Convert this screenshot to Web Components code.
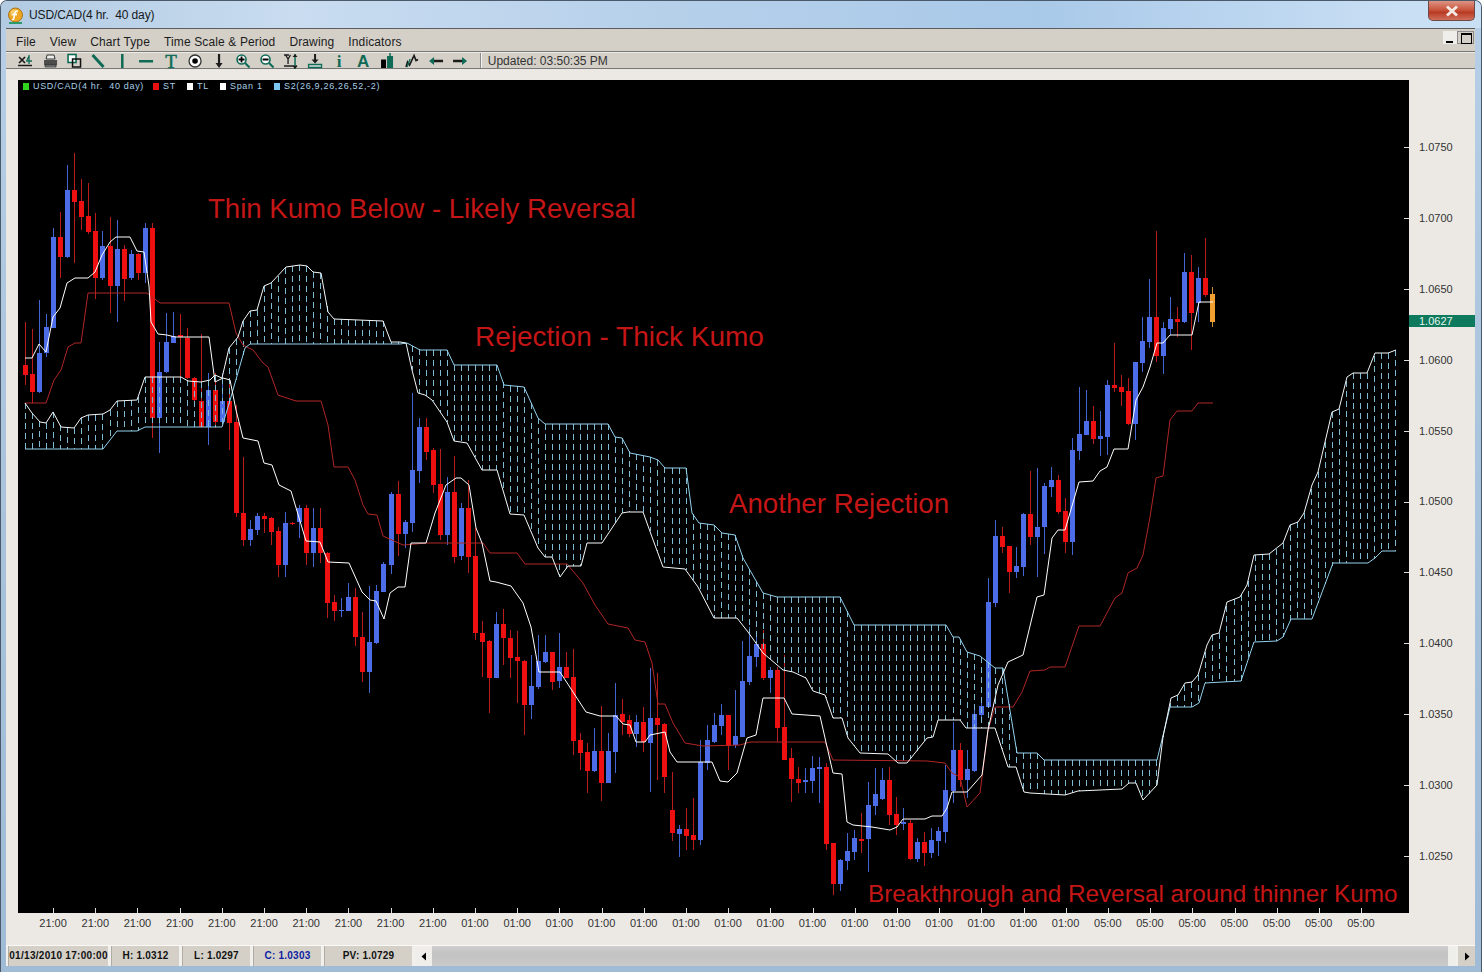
<!DOCTYPE html>
<html>
<head>
<meta charset="utf-8">
<title>USD/CAD</title>
<style>
html, body { margin: 0; padding: 0; background: #fff; }
body { font-family: "Liberation Sans", Arial, sans-serif; }
</style>
</head>
<body>
<app-window>
    <span slot="title">USD/CAD(4 hr.  40 day)</span>
    <app-menubar>
        <span>File</span><span>View</span><span>Chart Type</span><span>Time Scale &amp; Period</span><span>Drawing</span><span>Indicators</span>
    </app-menubar>
    <app-toolbar updated="Updated: 03:50:35 PM"></app-toolbar>
    <app-chart>
        <chart-note x="190" y="114" size="27.6">Thin Kumo Below - Likely Reversal</chart-note>
        <chart-note x="457" y="242" size="28">Rejection - Thick Kumo</chart-note>
        <chart-note x="711" y="409" size="27.7">Another Rejection</chart-note>
        <chart-note x="850" y="799" size="24.3">Breakthrough and Reversal around thinner Kumo</chart-note>
    </app-chart>
    <app-statusbar></app-statusbar>
</app-window>

<script>
// color, wick top, wick bottom, body top, body bottom. x comes from the index.
const CANDLES = `r 322 385 365 375,r 329 403 374 392,b 300 393 353 392,b 314 357 327 353,b 228 328 237 328,r 212 278 237 257,b 165 258 190 257,r 153 263 190 202,r 179 230 201 217,r 183 234 216 232,
r 213 299 231 278,b 231 280 246 278,r 217 313 246 286,b 220 322 249 286,r 245 301 249 279,b 250 280 254 278,r 253 280 254 273,b 223 283 228 273,r 223 438 228 418,b 342 453 372 418,
b 313 373 342 372,b 312 343 336 343,r 314 377 335 337,r 328 379 338 378,r 377 401 378 400,r 334 427 401 427,b 373 445 390 427,r 373 428 390 422,b 373 425 401 422,r 380 450 401 423,
r 405 517 422 513,r 457 546 513 540,b 520 546 529 540,b 513 535 516 530,r 513 533 516 519,r 517 545 518 532,r 527 577 531 565,b 512 577 523 565,r 522 525 523 524,b 505 538 508 522,
r 505 565 508 553,b 508 567 528 553,r 508 563 528 553,r 552 618 553 603,r 595 621 602 611,b 598 617 610 611,b 583 611 597 611,r 588 646 597 637,r 612 682 637 672,b 586 693 642 672,
b 585 644 591 643,b 562 592 564 592,b 492 574 494 565,r 481 556 494 534,b 520 548 522 534,b 393 532 470 523,b 418 483 427 471,r 418 460 427 452,r 448 493 450 485,r 449 540 484 535,
b 477 545 492 535,r 456 563 492 557,b 503 560 508 556,r 480 573 508 557,r 528 640 556 633,r 621 677 633 642,r 640 713 641 678,b 612 678 624 678,r 609 665 624 638,r 630 678 638 658,
r 631 703 657 661,r 660 735 661 705,b 655 719 686 705,b 635 689 661 687,b 635 663 652 662,r 652 690 652 682,b 633 688 667 681,r 652 678 667 678,r 649 755 677 741,r 733 770 740 753,
r 743 793 752 771,b 728 772 751 771,r 706 801 751 783,b 733 783 751 783,b 683 773 715 752,r 699 735 714 722,r 715 737 720 734,b 715 747 722 734,r 707 752 722 742,b 668 792 718 743,
r 673 780 718 725,r 723 793 724 777,r 772 841 810 833,b 825 857 829 834,r 808 850 829 836,r 798 850 835 840,b 740 845 762 840,b 725 770 740 763,b 713 743 725 742,b 704 735 715 726,
r 715 770 715 746,b 690 748 736 745,b 641 737 681 737,b 627 685 656 682,b 632 667 644 657,r 630 680 644 678,b 667 693 670 678,r 667 742 670 728,r 655 760 727 760,r 748 802 758 779,
r 767 793 779 783,b 768 793 780 782,b 756 793 768 781,b 757 803 767 769,r 763 850 767 844,r 843 895 843 884,b 859 891 860 884,b 833 870 851 861,b 830 860 838 852,r 813 853 839 841,
b 782 872 805 839,b 768 815 794 806,b 768 800 780 799,r 767 825 780 815,r 797 835 814 825,b 808 830 822 824,r 820 860 823 859,b 838 862 842 859,r 832 866 842 853,b 828 858 840 853,
b 827 856 831 841,b 765 843 790 832,b 722 803 750 791,r 743 787 750 780,b 750 798 769 780,b 707 772 714 771,b 700 720 706 715,b 578 707 602 707,b 520 607 536 603,r 527 553 536 547,
r 547 593 546 572,b 547 578 566 572,b 513 576 514 567,r 471 545 514 537,b 468 577 527 537,b 483 554 486 527,b 467 497 480 487,r 475 514 480 512,r 498 553 511 542,b 438 555 450 542,
b 387 460 434 451,b 390 435 421 435,r 406 444 421 439,b 411 456 436 439,b 380 455 385 437,r 343 392 385 388,r 375 406 387 392,r 378 425 391 424,b 362 440 362 424,b 317 372 341 363,
b 279 348 317 342,r 231 362 317 356,b 322 374 328 356,b 297 335 319 329,r 307 337 319 322,b 253 323 272 322,r 255 350 272 313,b 267 322 278 303,r 238 297 278 295,o 287 327 294 322`
    .split(',').map(s => s.trim().split(' '));

const TENKAN = [25,358,32,358,39,344,46,352,53,317,60,308,67,283,75,278,88,278,95,272,102,255,110,242,116,237,130,237,137,251,144,252,149,286,151,322,158,334,167,335,175,337,209,337,215,382,223,378,230,380,236,410,243,438,258,441,264,463,272,465,279,485,291,491,306,541,320,542,328,562,349,563,362,592,370,600,376,601,384,619,390,593,398,587,405,587,411,543,426,543,435,513,446,485,456,478,461,478,469,485,476,528,482,543,490,581,496,582,511,586,523,603,531,627,539,672,560,672,586,712,600,716,616,716,623,724,630,725,636,742,645,742,650,735,665,732,670,752,677,762,712,762,720,781,728,782,737,773,747,738,756,735,763,698,784,698,792,714,820,716,833,773,842,774,847,822,853,825,872,827,890,830,897,827,903,819,925,819,932,816,942,816,947,808,952,792,967,792,982,775,988,730,998,685,1008,662,1023,655,1037,597,1044,595,1052,538,1058,530,1065,530,1079,482,1093,481,1100,471,1107,467,1114,449,1128,449,1136,400,1143,387,1150,367,1157,343,1163,343,1170,335,1192,335,1199,302,1213,302];

const KIJUN = [25,403,46,403,54,380,61,370,68,347,75,343,81,343,88,293,147,293,160,303,229,303,236,333,243,345,253,350,263,363,268,367,278,395,296,401,321,401,328,425,334,467,348,467,355,480,363,505,368,514,377,515,383,536,403,545,427,543,483,543,490,553,517,553,525,564,567,564,583,583,595,605,608,624,628,628,635,640,645,642,652,663,658,704,665,704,673,723,685,743,703,746,740,745,750,742,825,742,833,760,927,761,945,763,952,773,960,777,967,807,980,793,988,730,995,707,1013,707,1022,692,1030,671,1045,670,1050,667,1065,667,1079,626,1100,626,1115,598,1122,593,1128,573,1137,568,1143,555,1150,517,1156,478,1163,476,1170,420,1177,411,1192,411,1198,403,1213,403];

const SPAN_A = [25,403,32,413,40,422,46,423,53,412,61,427,74,428,81,418,88,415,103,414,110,410,117,401,137,400,145,377,181,377,188,381,201,382,210,380,215,375,222,378,229,348,238,337,243,321,250,311,257,310,264,286,271,283,286,267,300,265,307,266,313,272,321,273,328,312,334,319,383,321,391,342,400,342,406,343,412,370,418,393,425,395,432,400,447,422,454,441,467,443,482,470,497,470,510,514,524,515,538,548,545,557,552,557,560,577,568,566,581,566,587,543,602,543,622,513,628,512,643,512,652,537,663,567,685,569,698,587,714,618,737,618,748,632,763,653,783,670,793,672,806,678,813,691,825,695,833,718,842,718,848,738,860,753,888,754,898,763,907,763,927,738,933,737,938,720,960,720,966,728,995,728,1008,767,1016,767,1024,792,1030,793,1065,795,1078,791,1122,789,1129,783,1136,783,1143,800,1157,785,1163,737,1171,698,1178,695,1185,683,1192,682,1198,675,1207,645,1212,635,1219,633,1227,602,1240,597,1247,585,1254,555,1269,554,1283,543,1290,525,1298,522,1304,513,1312,485,1318,472,1332,412,1339,409,1347,377,1353,373,1367,373,1375,353,1388,353,1396,350];

const SPAN_B = [25,449,103,449,117,431,137,431,145,427,222,427,231,397,245,348,250,344,400,344,407,343,420,350,447,350,454,365,497,365,504,385,524,387,538,418,545,424,608,424,615,437,622,438,630,453,650,457,658,460,665,468,686,468,692,513,699,523,714,525,722,533,735,535,743,558,763,593,777,597,840,597,854,625,946,625,953,637,959,637,967,652,980,656,995,668,1003,668,1017,753,1037,753,1044,760,1157,760,1170,707,1192,707,1199,703,1205,683,1241,681,1254,642,1277,641,1283,637,1291,619,1312,619,1333,563,1368,563,1375,558,1382,551,1396,551];

const PRICES = ['1.0750','1.0700','1.0650','1.0600','1.0550','1.0500','1.0450','1.0400','1.0350','1.0300','1.0250'];
const TIMES = [].concat(Array(10).fill('21:00'), Array(15).fill('01:00'), Array(7).fill('05:00'));

const toPoints = arr => {
    let out = '';
    for (let i = 0; i < arr.length; i += 2) out += arr[i] + ',' + arr[i + 1] + ' ';
    return out;
};

const valueAt = (arr, x) => {
    for (let i = 0; i < arr.length - 2; i += 2) {
        if (x >= arr[i] && x <= arr[i + 2]) {
            return arr[i + 1] + (arr[i + 3] - arr[i + 1]) * (x - arr[i]) / (arr[i + 2] - arr[i]);
        }
    }
    return arr[arr.length - 1];
};

const windowTemplate = document.createElement('template');
windowTemplate.innerHTML = `
    <style>
    :host {
        display: flex;
        flex-direction: column;
        width: 1482px;
        height: 972px;
        box-sizing: border-box;
        overflow: hidden;
        border-radius: 7px 7px 0 0;
        border: 1px solid #4a5a6a;
        border-bottom: 0;
        background: linear-gradient(180deg, #b7cfe6, #a9c3dc 50%, #9fbbd6);
    }
    .title {
        display: flex;
        align-items: flex-start;
        height: 27px;
        flex: none;
        background: linear-gradient(90deg, #b2cbe2, #c9dcf0 20%, #b6d0ea 45%, #a9c9e9 70%, #c9dff4 95%);
    }
    .icon { margin: 6px 5px 0 6px; flex: none; }
    .name {
        font: 12px "Liberation Sans", Arial, sans-serif;
        letter-spacing: -.12px;
        white-space: pre;
        color: #141a20;
        margin-top: 7px;
        flex: 1;
    }
    .close {
        width: 47px;
        height: 20px;
        margin-right: 6px;
        flex: none;
        display: flex;
        align-items: center;
        justify-content: center;
        border: 1px solid #6b4a48;
        border-top: 0;
        box-sizing: border-box;
        border-radius: 0 0 5px 5px;
        background: linear-gradient(180deg, #dd9484, #c9573f 45%, #b93a24 60%, #d0705c);
    }
    .content {
        flex: 1;
        display: flex;
        flex-direction: column;
        margin: 0 6px 6px 5px;
        min-height: 0;
        background: #ece9e4;
        border-top: 1px solid #5c5c5c;
    }
    </style>
    <div class="title">
        <svg class="icon" width="17" height="17" viewBox="0 0 17 17">
            <circle cx="8.5" cy="8" r="7" fill="#efa622" stroke="#a8741a"/>
            <circle cx="7" cy="6" r="3.5" fill="#f8dc8c" opacity=".7"/>
            <path d="M11 4C8.500 3.500 8 5 7.500 7.500L6.800 11.500C6.500 12.500 5.800 12.800 5 12.500M5.500 7.500H10" fill="none" stroke="#fff" stroke-width="1.500"/>
            <rect x="2" y="15" width="13" height="2" fill="#2e9a6c"/>
        </svg>
        <span class="name"><slot name="title"></slot></span>
        <div class="close">
            <svg width="14" height="12" viewBox="0 0 14 12">
                <path d="M2 1.500L12 10.500M12 1.500L2 10.500" stroke="#f4e8e4" stroke-width="3"/>
            </svg>
        </div>
    </div>
    <div class="content"><slot></slot></div>
`;

class AppWindow extends HTMLElement {
    constructor() {
        super();
        this.attachShadow({ mode: 'open' }).appendChild(windowTemplate.content.cloneNode(true));
    }
}

const menuTemplate = document.createElement('template');
menuTemplate.innerHTML = `
    <style>
    :host {
        display: flex;
        align-items: center;
        justify-content: space-between;
        flex: none;
        height: 20px;
        padding-left: 10px;
        padding-top: 2px;
        box-sizing: content-box;
        background: #d4d0c8;
        border-bottom: 1px solid #777;
        box-shadow: 0 1px 0 #eeeae4;
        font: 12px "Liberation Sans", Arial, sans-serif;
        letter-spacing: .13px;
        color: #1c1c1c;
    }
    .items { display: flex; gap: 14px; padding-top: 2px; }
    .mdi { display: flex; margin-right: 1px; align-self: flex-start; }
    .btn {
        width: 14px;
        height: 13px;
        background: #f0eeea;
        position: relative;
    }
    .min i {
        position: absolute;
        left: 3px;
        bottom: 1px;
        width: 7px;
        height: 2px;
        background: #000;
    }
    .max {
        width: 17px;
        background: #d4d0c8;
        border: 1px solid #8a8a8a;
        box-sizing: border-box;
    }
    .max i {
        position: absolute;
        left: 3px;
        top: 1px;
        width: 9px;
        height: 8px;
        border: 1px solid #000;
        border-top-width: 2px;
    }
    </style>
    <div class="items"><slot></slot></div>
    <div class="mdi">
        <div class="btn min"><i></i></div>
        <div class="btn max"><i></i></div>
    </div>
`;

class AppMenubar extends HTMLElement {
    constructor() {
        super();
        this.attachShadow({ mode: 'open' }).appendChild(menuTemplate.content.cloneNode(true));
    }
}

const TEAL = '#0f6b55';
const DARK = '#1c1c1c';
const ICONS = [
    `<path d="M1 4l6 6M7 4l-6 6" stroke="${DARK}" stroke-width="1.700" fill="none"/><path d="M11 2v9M8 8h6M9 7l2-4" stroke="${TEAL}" stroke-width="1.300" fill="none"/><path d="M0 12.500h14" stroke="${DARK}" stroke-width="1.300"/>`,
    `<path d="M5 2h7l1 4H4z" fill="#eee" stroke="#333"/><path d="M2 7h13v5H2z" fill="#4c4c4c"/><path d="M3 12h11v2H3z" fill="#888" stroke="#222" stroke-width=".700"/>`,
    `<rect x="2" y="1.500" width="8" height="8" fill="#fff" stroke="${TEAL}" stroke-width="1.600"/><rect x="6.500" y="6" width="8" height="8" fill="none" stroke="#111" stroke-width="1.500"/>`,
    `<path d="M2.500 2L13.500 14" stroke="${TEAL}" stroke-width="3"/>`,
    `<rect x="7" y="1" width="2.500" height="14" fill="${TEAL}"/>`,
    `<rect x="1" y="7" width="14" height="2.500" fill="${TEAL}"/>`,
    `<text x="8" y="14.500" text-anchor="middle" font-family="Liberation Serif" font-size="19" stroke="${TEAL}" stroke-width=".5" fill="${TEAL}">T</text>`,
    `<circle cx="8" cy="8" r="6" fill="#fff" stroke="#333" stroke-width="1.300"/><circle cx="8" cy="8" r="2.800" fill="#000"/>`,
    `<path d="M8 1v10" stroke="${DARK}" stroke-width="2.200"/><path d="M4.500 10h7L8 15z" fill="${DARK}"/>`,
    `<circle cx="6.500" cy="6.500" r="4.500" fill="#fff" stroke="${TEAL}" stroke-width="1.600"/><path d="M3.500 6.500h6M6.500 3.500v6" stroke="#000" stroke-width="1.800"/><path d="M10 10l4.500 4.500" stroke="${TEAL}" stroke-width="2"/>`,
    `<circle cx="6.500" cy="6.500" r="4.500" fill="#fff" stroke="${TEAL}" stroke-width="1.600"/><path d="M3.500 6.500h6" stroke="#000" stroke-width="1.800"/><path d="M10 10l4.500 4.500" stroke="${TEAL}" stroke-width="2"/>`,
    `<path d="M1 2h5M2.500 2L5 6l2.500-4M5 6v5M1 13h13" stroke="${DARK}" stroke-width="1.300" fill="none"/><path d="M12 1v15" stroke="${TEAL}" stroke-width="1.500"/><path d="M9.500 4L12 1l2.500 3zM9.500 13l2.500 3 2.500-3z" fill="${DARK}"/>`,
    `<path d="M8 1v6" stroke="${DARK}" stroke-width="2"/><path d="M4.500 6.500h7L8 10.500z" fill="${DARK}"/><path d="M1.500 11.500h13v3h-13z" fill="#ddd" stroke="${TEAL}" stroke-width="1.300"/>`,
    `<text x="8" y="14" text-anchor="middle" font-family="Liberation Serif" font-weight="bold" font-size="17" fill="${TEAL}">i</text>`,
    `<text x="8" y="14" text-anchor="middle" font-family="Liberation Sans" font-weight="bold" font-size="17" fill="${TEAL}">A</text>`,
    `<rect x="2" y="6.500" width="5" height="8.500" fill="#000"/><rect x="8" y="3" width="6" height="12" fill="${TEAL}"/><path d="M11 0v3" stroke="${TEAL}" stroke-width="1.500"/>`,
    `<path d="M2 14l1.500-5 2 3L10 2.500l2 5 2-1" fill="none" stroke="${DARK}" stroke-width="1.700"/><path d="M3 14l3-8" stroke="${TEAL}" stroke-width="1.300"/>`,
    `<path d="M5 8h10" stroke="${DARK}" stroke-width="2.300"/><path d="M6 4L1 8l5 4z" fill="${TEAL}"/>`,
    `<path d="M1 8h10" stroke="${DARK}" stroke-width="2.300"/><path d="M10 4l5 4-5 4z" fill="${TEAL}"/>`
];

class AppToolbar extends HTMLElement {
    constructor() {
        super();
        this._shadowRoot = this.attachShadow({ mode: 'open' });
    }

    connectedCallback() {
        // the svg is taller than the bar so that the T, i and A glyph boxes are not clipped
        const icons = ICONS.map(i => `<svg width="24.100" height="24" viewBox="-4 -4 24 24">${i}</svg>`).join('');
        this._shadowRoot.innerHTML = `
            <style>
            :host {
                display: flex;
                align-items: center;
                flex: none;
                height: 15px;
                margin-top: 1px;
                padding-left: 8px;
                background: #d4d0c8;
                border-bottom: 1px solid #777;
                font: 12px "Liberation Sans", Arial, sans-serif;
                color: #333;
            }
            svg { flex: none; display: block; margin: -4px 0 -5px; }
            .sep {
                height: 15px;
                margin: 0 6px 0 8px;
                border-left: 1px solid #8c8c8c;
                border-right: 1px solid #f4f2ee;
            }
            </style>
            ${icons}
            <div class="sep"></div>
            <span>${this.getAttribute('updated')}</span>
        `;
    }
}

const chartTemplate = document.createElement('template');
chartTemplate.innerHTML = `
    <style>
    :host {
        display: grid;
        grid-template-columns: 1391px 1fr;
        grid-template-rows: 833px 1fr;
        flex: 1;
        min-height: 0;
        padding: 11px 0 0 12px;
        background: #ece9e4;
        font: 11px "Liberation Sans", Arial, sans-serif;
        color: #333;
    }
    .plot { position: relative; background: #000; overflow: hidden; }
    svg { display: block; }
    .legend {
        position: absolute;
        left: 5px;
        top: 0;
        display: flex;
        align-items: center;
        height: 12px;
        font-size: 9px;
        letter-spacing: .68px;
        white-space: pre;
        color: #a8cfe8;
    }
    .legend i {
        width: 6px;
        height: 7px;
        margin-right: 4px;
        display: block;
    }
    .legend span { display: block; }
    .prices {
        position: relative;
        display: flex;
        flex-direction: column;
        padding-top: 31.500px;
        padding-left: 10px;
    }
    .prices span { display: flex; align-items: center; height: 70.900px; flex: none; }
    .last {
        position: absolute;
        left: 0;
        right: 0;
        top: 235px;
        height: 12px;
        padding-left: 10px;
        line-height: 13px;
        background: #0d7a5e;
        color: #e8f4ee;
    }
    .times { grid-column: 1 / 3; display: flex; padding-left: 14px; padding-top: 4px; }
    .times span { flex: none; width: 42.200px; text-align: center; }
    </style>
    <div class="plot">
        <svg width="1391" height="833" viewBox="18 80 1391 833"></svg>
        <div class="legend">
            <i style="background:#31d41c"></i><span style="width:120px">USD/CAD(4 hr.  40 day)</span>
            <i style="background:#e81010"></i><span style="width:24px">ST</span>
            <i style="background:#fff"></i><span style="width:23px">TL</span>
            <i style="background:#fff"></i><span style="width:44px">Span 1</span>
            <i style="background:#7cc8f0"></i><span>S2(26,9,26,26,52,-2)</span>
        </div>
        <slot></slot>
    </div>
    <div class="prices"></div>
    <div class="times"></div>
`;

class AppChart extends HTMLElement {
    constructor() {
        super();
        this._shadowRoot = this.attachShadow({ mode: 'open' });
        this._shadowRoot.appendChild(chartTemplate.content.cloneNode(true));
    }

    connectedCallback() {
        this.render();
    }

    render() {
        const colors = {
            r: ['#b81c1c', '#ee1010'],
            b: ['#4464d0', '#4c6cE8'],
            o: ['#d09030', '#f0a030']
        };
        let candles = '';
        CANDLES.forEach((c, i) => {
            const cx = Math.round(25.2 + 7.025 * i);
            const [wick, body] = colors[c[0]];
            const [wt, wb, bt, bb] = c.slice(1).map(Number);
            candles += `<rect x="${cx}" y="${wt}" width="1" height="${wb - wt}" fill="${wick}"/>`;
            candles += `<rect x="${cx - 2}" y="${bt}" width="5" height="${Math.max(bb - bt, 1)}" fill="${body}"/>`;
        });

        let hatch = '';
        for (let i = 0; i < 196; i++) {
            const cx = Math.round(25.2 + 7.025 * i);
            const a = valueAt(SPAN_A, cx);
            const b = valueAt(SPAN_B, cx);
            hatch += `<path d="M${cx + 0.5} ${Math.min(a, b).toFixed(0)}V${Math.max(a, b).toFixed(0)}"/>`;
        }

        let ticks = '';
        TIMES.forEach((t, i) => {
            ticks += `<rect x="${Math.round(53 + 42.2 * i)}" y="908" width="1" height="5" fill="#ddd"/>`;
        });
        PRICES.forEach((p, i) => {
            ticks += `<rect x="1404" y="${Math.round(147 + 70.9 * i)}" width="5" height="1" fill="#ddd"/>`;
        });

        this._shadowRoot.querySelector('svg').innerHTML = `
            <g shape-rendering="crispEdges">${candles}</g>
            <g fill="none" stroke="#7fb9d2" stroke-width="1" stroke-dasharray="6 4" shape-rendering="crispEdges">${hatch}</g>
            <polyline points="${toPoints(KIJUN)}" fill="none" stroke="#b02626" stroke-width="1"/>
            <polyline points="${toPoints(SPAN_B)}" fill="none" stroke="#93d2ee" stroke-width="1"/>
            <polyline points="${toPoints(SPAN_A)}" fill="none" stroke="#f4f8fa" stroke-width="1"/>
            <polyline points="${toPoints(TENKAN)}" fill="none" stroke="#fff" stroke-width="1"/>
            <g shape-rendering="crispEdges">${ticks}</g>
        `;

        this._shadowRoot.querySelector('.prices').innerHTML =
            PRICES.map(p => `<span>${p}</span>`).join('') + '<div class="last">1.0627</div>';
        this._shadowRoot.querySelector('.times').innerHTML =
            TIMES.map(t => `<span>${t}</span>`).join('');
    }
}

const noteTemplate = document.createElement('template');
noteTemplate.innerHTML = `
    <style>
    :host {
        position: absolute;
        white-space: nowrap;
        font: 27px/30px "Liberation Sans", Arial, sans-serif;
        color: #c41616;
    }
    </style>
    <slot></slot>
`;

class ChartNote extends HTMLElement {
    constructor() {
        super();
        this.attachShadow({ mode: 'open' }).appendChild(noteTemplate.content.cloneNode(true));
    }

    connectedCallback() {
        this.style.left = this.getAttribute('x') + 'px';
        this.style.top = this.getAttribute('y') + 'px';
        this.style.fontSize = this.getAttribute('size') + 'px';
    }
}

const statusTemplate = document.createElement('template');
statusTemplate.innerHTML = `
    <style>
    :host {
        display: flex;
        flex: none;
        height: 21px;
        padding-left: 2px;
        gap: 3px;
        box-sizing: border-box;
        background: #f2f0ec;
        border-top: 1px solid #faf9f6;
        font: bold 10px/19px "Liberation Sans", Arial, sans-serif;
        letter-spacing: .22px;
        color: #111;
    }
    .cell {
        flex: none;
        background: #d4d0c8;
        text-align: center;
        overflow: hidden;
        white-space: nowrap;
        border-left: 1px solid #b0aca4;
    }
    .blue { color: #0e1ea4; }
    .btn {
        flex: none;
        width: 17px;
        background: #f0eeea;
        display: flex;
        align-items: center;
        justify-content: center;
    }
    .track {
        flex: 1;
        background: linear-gradient(180deg, #cfcfcf, #c2c2c2 40%, #cacaca);
        display: flex;
        justify-content: flex-end;
        margin-left: -3px;
    }
    .thumb { width: 8px; background: #eeeeea; margin-right: -3px; }
    .date { width: 99px; letter-spacing: .3px; }
    </style>
    <div class="cell date">01/13/2010 17:00:00</div>
    <div class="cell" style="width:67px">H: 1.0312</div>
    <div class="cell" style="width:67px">L: 1.0297</div>
    <div class="cell blue" style="width:67px">C: 1.0303</div>
    <div class="cell" style="width:87px">PV: 1.0729</div>
    <div class="btn"><svg width="6" height="9"><path d="M5 0.500V8.500L0.500 4.500z" fill="#000"/></svg></div>
    <div class="track"><div class="thumb"></div></div>
    <div class="btn" style="background:#d4d0c8;margin-left:2px"><svg width="6" height="9"><path d="M1 0.500V8.500L5.500 4.500z" fill="#000"/></svg></div>
`;

class AppStatusbar extends HTMLElement {
    constructor() {
        super();
        this.attachShadow({ mode: 'open' }).appendChild(statusTemplate.content.cloneNode(true));
    }
}

window.customElements.define('app-window', AppWindow);
window.customElements.define('app-menubar', AppMenubar);
window.customElements.define('app-toolbar', AppToolbar);
window.customElements.define('app-chart', AppChart);
window.customElements.define('chart-note', ChartNote);
window.customElements.define('app-statusbar', AppStatusbar);
</script>
</body>
</html>
